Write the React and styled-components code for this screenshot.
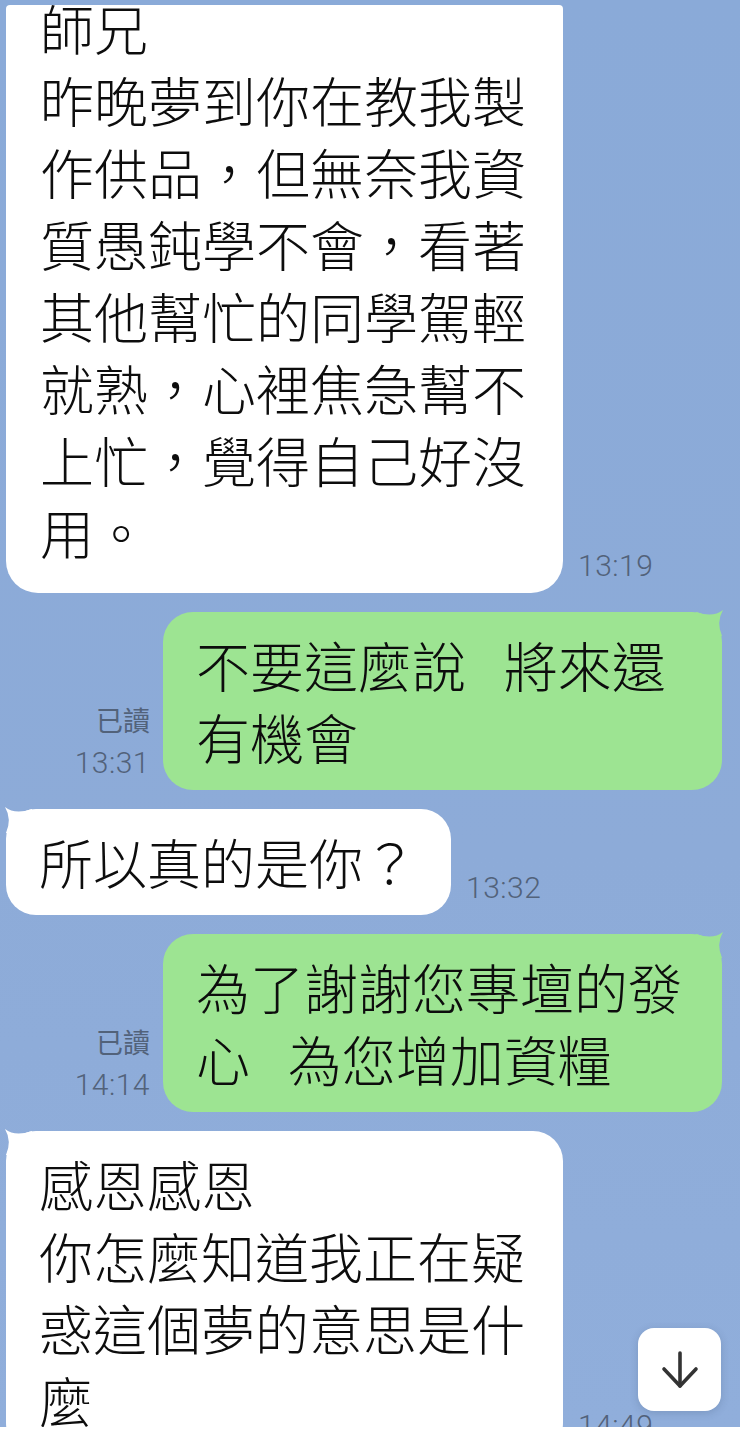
import React from 'react'
import styled, { createGlobalStyle } from 'styled-components'

const GlobalStyle = createGlobalStyle`
  html, body {
    margin: 0;
    padding: 0;
    background: #ffffff;
  }
  * {
    box-sizing: border-box;
  }
`

const messages = [
  {
    id: 1,
    side: 'in',
    cropped: true,
    wide: true,
    time: '13:19',
    lines: [
      '師兄',
      '昨晚夢到你在教我製',
      '作供品，但無奈我資',
      '質愚鈍學不會，看著',
      '其他幫忙的同學駕輕',
      '就熟，心裡焦急幫不',
      '上忙，覺得自己好沒',
      '用。',
    ],
  },
  { id: 2, side: 'out', wide: true, time: '13:31', lines: ['不要這麼說  將來還', '有機會'] },
  { id: 3, side: 'in', time: '13:32', lines: ['所以真的是你？'] },
  { id: 4, side: 'out', wide: true, time: '14:14', lines: ['為了謝謝您專壇的發', '心  為您增加資糧'] },
  {
    id: 5,
    side: 'in',
    wide: true,
    time: '14:49',
    lines: ['感恩感恩', '你怎麼知道我正在疑', '惑這個夢的意思是什', '麼'],
  },
]

const Tail = ({ side }) => (
  <TailSvg $side={side} viewBox="0 0 26 26" width="26" height="26">
    <path d="M0 0 Q17 6 27 -2 Q20 10 26 24 L0 24 Z" />
  </TailSvg>
)

const Lines = ({ lines, cropped }) => (
  <Text $cropped={cropped}>
    {lines.map((l, i) => (
      <Line key={i}>{l}</Line>
    ))}
  </Text>
)

export default function App() {
  return (
    <>
      <GlobalStyle />
      <Screen>
        <Chat>
          {messages.map((m) =>
            m.side === 'in' ? (
              <Row key={m.id} $side="in">
                <Bubble $side="in" $cropped={m.cropped} $wide={m.wide}>
                  {!m.cropped && <Tail side="in" />}
                  <Lines lines={m.lines} cropped={m.cropped} />
                </Bubble>
                <Meta $side="in">
                  <Time>{m.time}</Time>
                </Meta>
              </Row>
            ) : (
              <Row key={m.id} $side="out">
                <Meta $side="out">
                  <Read>已讀</Read>
                  <Time>{m.time}</Time>
                </Meta>
                <Bubble $side="out" $wide={m.wide}>
                  <Tail side="out" />
                  <Lines lines={m.lines} />
                </Bubble>
              </Row>
            )
          )}
        </Chat>
        <Footer />
        <ScrollDown aria-label="scroll down">
          <svg viewBox="0 0 40 40" width="40" height="40" fill="none" stroke="#333" strokeWidth="3.6" strokeLinecap="round" strokeLinejoin="round">
            <path d="M20 3 V36" />
            <path d="M4 19 L20 36 L36 19" />
          </svg>
        </ScrollDown>
      </Screen>
    </>
  )
}

const Screen = styled.div`
  position: relative;
  width: 740px;
  height: 1432px;
  display: flex;
  flex-direction: column;
  background: #8cabd8;
  overflow: hidden;
  font-family: "Noto Sans CJK TC", "Noto Sans", sans-serif;
`

const Chat = styled.div`
  flex: 1;
  min-height: 0;
  overflow: hidden;
  display: flex;
  flex-direction: column;
  gap: 19px;
  padding: 5px 18px 0 6px;
  background: linear-gradient(180deg, #8aaad8 0%, #8dabd8 60%, #90aedb 100%);
`

const Row = styled.div`
  display: flex;
  align-items: flex-end;
  justify-content: ${(p) => (p.$side === 'out' ? 'flex-end' : 'flex-start')};
  gap: ${(p) => (p.$side === 'out' ? '13px' : '15px')};
  flex-shrink: 0;
`

const Bubble = styled.div`
  position: relative;
  flex-shrink: 0;
  width: ${(p) => (p.$wide ? (p.$side === 'out' ? '559px' : '557px') : 'auto')};
  background: ${(p) => (p.$side === 'out' ? '#9de492' : '#ffffff')};
  border-radius: ${(p) => (p.$cropped ? '4px 4px 32px 32px' : '30px')};
  padding: ${(p) =>
    p.$cropped ? '0 37px 25px 34px' : p.$side === 'out' ? '17px 30px 17px 33px' : '17px 34px 17px 33px'};
`

const TailSvg = styled.svg`
  position: absolute;
  top: 0;
  ${(p) => (p.$side === 'out' ? 'right: 0;' : 'left: 0; transform: scaleX(-1);')}
  fill: ${(p) => (p.$side === 'out' ? '#9de492' : '#ffffff')};
  overflow: visible;
`

const Text = styled.div`
  position: relative;
  margin-top: ${(p) => (p.$cropped ? '-13px' : '0')};
  font-size: 54px;
  line-height: 72px;
  color: #0d0d0d;
  font-weight: 300;
`

const Line = styled.span`
  display: block;
  white-space: pre;
  word-spacing: 7px;
`

const Meta = styled.div`
  display: flex;
  flex-direction: column;
  align-items: ${(p) => (p.$side === 'out' ? 'flex-end' : 'flex-start')};
  gap: 8px;
  margin-bottom: 9px;
  color: #52627a;
  font-family: Roboto, "Noto Sans CJK TC", sans-serif;
`

const Read = styled.span`
  font-family: "Noto Sans CJK TC", sans-serif;
  font-size: 27px;
  line-height: 34px;
`

const Time = styled.span`
  font-size: 30px;
  line-height: 36px;
  font-weight: 300;
  letter-spacing: 0.5px;
`

const Footer = styled.div`
  height: 5px;
  flex-shrink: 0;
  background: #ffffff;
`

const ScrollDown = styled.button`
  position: absolute;
  right: 19px;
  bottom: 21px;
  width: 83px;
  height: 83px;
  border: none;
  border-radius: 16px;
  background: #ffffff;
  box-shadow: 0 2px 8px rgba(40, 60, 90, 0.2);
  display: flex;
  align-items: center;
  justify-content: center;
  padding: 0;
`
